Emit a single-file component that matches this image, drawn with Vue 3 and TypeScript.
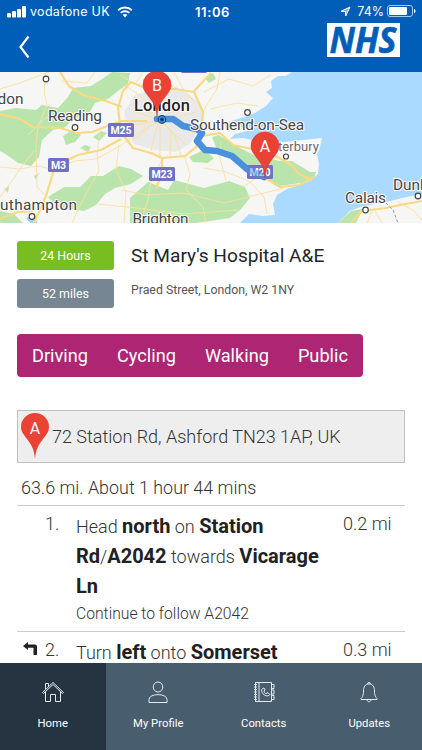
<script setup lang="ts">
import { ref } from 'vue'

interface Tab {
  id: string
  label: string
}

const modes: string[] = ['Driving', 'Cycling', 'Walking', 'Public']

const tabs: Tab[] = [
  { id: 'home', label: 'Home' },
  { id: 'profile', label: 'My Profile' },
  { id: 'contacts', label: 'Contacts' },
  { id: 'updates', label: 'Updates' }
]

const mode = ref('Driving')
const activeTab = ref('home')
</script>

<template>
  <div class="screen">
    <header class="header">
      <div class="status">
        <div class="carrier">
          <svg class="signal" width="19" height="12" viewBox="0 0 19 12">
            <rect x="0" y="7" width="4" height="4.5" rx="1" />
            <rect x="5" y="5" width="4" height="6.5" rx="1" />
            <rect x="10" y="3" width="4" height="8.5" rx="1" />
            <rect x="15" y="0" width="4" height="11.5" rx="1" />
          </svg>
          <span>vodafone UK</span>
          <svg class="wifi" width="16" height="12" viewBox="0 0 16 12">
            <path d="M1.1 4.2C5 .6 11 .6 14.9 4.2M3.7 6.9c2.4-2.2 6.2-2.2 8.6 0" />
            <path class="dot" d="M5.6 8.8c1.4-1.2 3.4-1.2 4.8 0L8 11.4z" />
          </svg>
        </div>
        <div class="time">11:06</div>
        <div class="battery">
          <svg width="11" height="11" viewBox="0 0 11 11">
            <path class="arrow" d="M10 1 1 5.3l4.5.2.2 4.5z" />
          </svg>
          <span>74%</span>
          <svg width="29" height="13" viewBox="0 0 29 13">
            <rect class="shell" x=".5" y=".5" width="25" height="11" rx="2.5" />
            <rect class="level" x="2" y="2" width="18" height="8" rx="1" />
            <path class="level" d="M27 4c2 .6 2 3.4 0 4z" />
          </svg>
        </div>
      </div>
      <div class="nav">
        <button class="back" aria-label="Back">
          <svg width="12" height="24" viewBox="0 0 12 24">
            <path d="M9.5 1.5 1.5 12l8 10.5" />
          </svg>
        </button>
        <svg class="nhs" width="73" height="34" viewBox="0 0 73 34">
          <rect width="73" height="34" />
          <text x="2.500" y="29.700" textLength="67" lengthAdjust="spacingAndGlyphs">NHS</text>
        </svg>
      </div>
    </header>

    <svg class="map" width="422" height="151" viewBox="0 72 422 151">
      <rect class="sea" y="72" width="422" height="151" />
      <path
        class="land"
        d="M0 72H292L286 76 278 76 271 81 272 88 266 92 273 98 266 106 255 113 245 117 234 120 224 125 233 129 242 127 251 130 235 134 230 139 243 138 257 141 270 142 285 142 303 140 322 138 320 148 317 154 319 164 318 174 312 180 302 184 287 189 277 195 273 204 275 215 263 216 249 214 240 223H0z"
      />
      <path class="land" d="M338 223 350 211 363 206 382 203 402 198 422 194V223z" />
      <g class="green">
        <path d="M0 111 16 108 36 110 42 105 63 109 72 119 66 127 53 130 42 140 39 157 31 166 18 163 7 155 0 151z" />
        <path d="M58 108 68 97 73 88 91 86 102 79 112 72 130 73 128 84 118 91 108 99 95 103 88 115 76 118z" />
        <path d="M48 197 64 187 80 187 91 176 103 176 119 166 131 169 143 176 131 184 115 188 105 194 96 205 84 211 57 207z" />
        <path d="M130 198 148 182 168 190 174 180 204 188 229 181 245 187 250 198 240 210 230 218 196 223H130z" />
        <path d="M212 137 219 135 229 142 240 148 256 156 280 161 292 161 310 172 316 172 314 180 294 184 278 186 265 179 239 163 216 147z" />
        <path d="M63 136 72 130 81 135 75 142 66 145z" />
        <path d="M189 157 204 150 214 158 208 163 193 162z" />
        <path d="M338 223 351 211 363 209 356 223z" />
        <path d="M0 211 14 214 23 223H0zM80 148l5-3 6 2-3 5zM161 74l8 2-3 5-7-1z" />
        <path d="M4 189 9 186 8 193zM34 176 39 173 36 180zM205 78l8-5 3 6-7 4zM93 137l8-6 6 2-8 8zM74 90l10-2-6 7z" />
      </g>
      <path
        class="city"
        d="M124 112 135 95 152 90 170 84 184 91 197 101 204 114 198 130 190 144 176 152 154 150 134 144 128 129z"
      />
      <path class="water" d="M26 218 32 216 38 223H30z" />
      <g class="minor">
        <path d="M0 167 20 169 37 166 52 169 75 161 96 159 120 146 140 132 160 120" />
        <path d="M0 89 20 83 38 76 50 72M46 72 44 92 47 105 38 127 36 143 37 187 45 195" />
        <path d="M0 197 12 181 22 166 34 151M61 81l26 2 8-11M65 114 45 118 28 135" />
        <path d="M100 131 97 154 99 171 88 190 80 206 72 223M119 145l-3 25 10 22-2 31" />
        <path d="M184 155 190 174 186 190 203 207 206 223M162 160l-11 20-3 20-8 23" />
        <path d="M121 190 148 195 184 193 224 203 252 196 284 188M98 204 136 208 184 214 238 210" />
        <path d="M204 168 226 172 249 181 264 197 267 214M221 142 220 159 226 181M270 150 256 178 242 188" />
        <path d="M126 86 142 97 154 111 160 120 155 133 151 151M132 111 160 120 190 97M132 140 160 120 186 145" />
        <path d="M160 120 175 136 181 155M160 120 171 131 170 158M160 120 160 158M133 125 160 120 140 105M160 120 194 113" />
        <path d="M120 75 135 84 143 72M174 72 183 89 193 100M204 92 229 79 253 86 271 75M210 109 237 103 258 106M220 72 217 89 203 111" />
        <path d="M375 211 382 223M398 202 414 211 422 220M367 223 373 209" />
      </g>
      <g class="major">
        <path d="M0 114 20 119 33 127 61 128 76 133 92 132 121 121 147 121" />
        <path d="M60 72 69 86 83 95 106 101 122 107M34 223 46 196 55 166 78 155 101 150 121 139" />
        <path d="M123 91 118 108 121 132 133 148 151 153 162 158 185 156 196 147 201 136 203 112 194 92 175 89 145 88 131 82z" />
        <path d="M162 158 162 174 156 188M194 91 211 73M202 136 220 133 233 145 252 149 274 155 290 164 299 174 312 180" />
        <path d="M250 165 265 178 280 187 299 185 313 177M0 219 18 212 33 211" />
        <path d="M351 223 362 211 386 208 400 205 422 201" />
      </g>
      <path class="border" d="M386 203 393 210 398 223" />
      <path class="route" d="M157 119 173 119 183 126 197 129 202 133 197 141 205 150 217 151 232 156 247 169 264 177" />

      <g class="shield">
        <rect x="108" y="123" width="26" height="14" rx="1.5" />
        <rect x="48" y="158" width="21" height="14" rx="1.5" />
        <rect x="149" y="167" width="26" height="14" rx="1.5" />
        <rect x="247" y="165" width="26" height="14" rx="1.5" />
        <rect x="181" y="66" width="26" height="7" rx="1.5" />
        <text x="121" y="133.800">M25</text>
        <text x="58.500" y="168.800">M3</text>
        <text x="162" y="177.800">M23</text>
        <text x="260" y="175.800">M20</text>
      </g>
      <path class="route over" d="M247 169 264 177" />

      <g class="towns">
        <circle cx="46" cy="79" r="2.800" />
        <circle cx="75" cy="127.500" r="2.800" />
        <circle cx="32" cy="216.500" r="2.800" />
        <circle cx="247.500" cy="112.500" r="2.800" />
        <circle cx="286" cy="156.500" r="2.500" />
        <circle cx="365.500" cy="210" r="2.800" />
        <circle cx="418" cy="196" r="2.800" />
        <circle class="start" cx="162" cy="119.500" r="3.800" />
        <circle class="start-dot" cx="162" cy="119.500" r="1.500" />
      </g>

      <g class="names">
        <text x="-2.500" y="104">don</text>
        <text x="48" y="121" textLength="54">Reading</text>
        <text class="capital" x="134" y="111" textLength="56">London</text>
        <text x="190" y="130" textLength="114">Southend-on-Sea</text>
        <text class="small" x="278" y="151" textLength="41">terbury</text>
        <text x="-9" y="210" textLength="86">outhampton</text>
        <text x="132.500" y="223.500" textLength="56">Brighton</text>
        <text x="345" y="203" textLength="41">Calais</text>
        <text x="393" y="189.500">Dunk</text>
      </g>

      <g class="pin">
        <path d="M157 116c-1-10-3.500-13-8-19-4-5-6-8-6-12a13.800 13.800 0 0 1 28 0c0 4-2 7-6 12-4.500 6-7 9-8 19z" />
        <text x="157" y="90.500">B</text>
        <path d="M265 178c-1-10-3.500-14-8-20-4-5-6-8-6-12a13.800 13.800 0 0 1 28 0c0 4-2 7-6 12-4.500 6-7 10-8 20z" />
        <text x="265" y="152">A</text>
      </g>
    </svg>

    <main class="content">
      <section class="place">
        <div class="badges">
          <span class="badge open">24 Hours</span>
          <span class="badge distance">52 miles</span>
        </div>
        <div class="details">
          <h1>St Mary's Hospital A&amp;E</h1>
          <p>Praed Street, London, W2 1NY</p>
        </div>
      </section>

      <div class="modes">
        <button v-for="m in modes" :key="m" @click="mode = m">{{ m }}</button>
      </div>

      <section class="directions">
        <div class="origin">
          <svg width="28" height="47" viewBox="0 0 28 47">
            <path d="M14 46c-1-10-3.500-14-8-20-4-5-6-8-6-12a14 14 0 0 1 28 0c0 4-2 7-6 12-4.500 6-7 10-8 20z" />
            <text x="14" y="20.500">A</text>
          </svg>
          <span>72 Station Rd, Ashford TN23 1AP, UK</span>
        </div>
        <p class="summary">63.6 mi. About 1 hour 44 mins</p>
        <div class="step">
          <span class="turn"></span>
          <span class="number">1.</span>
          <div class="text">
            Head <b>north</b> on <b>Station</b> <span class="road"><b>Rd</b>/<b>A2042</b></span> towards <b>Vicarage Ln</b>
            <div class="note">Continue to follow A2042</div>
          </div>
          <span class="miles">0.2 mi</span>
        </div>
        <div class="step">
          <span class="turn">
            <svg width="14" height="14" viewBox="0 0 14 14">
              <path d="M0 4 5 0v2.500h7q2 0 2 2V13h-3.500V5.700H5V8z" />
            </svg>
          </span>
          <span class="number">2.</span>
          <div class="text">Turn <b>left</b> onto <b>Somerset</b></div>
          <span class="miles">0.3 mi</span>
        </div>
      </section>
    </main>

    <nav class="tabs">
      <button
        v-for="tab in tabs"
        :key="tab.id"
        class="tab"
        :class="{ active: tab.id === activeTab }"
        @click="activeTab = tab.id"
      >
        <svg width="24" height="24" viewBox="0 0 24 24">
          <path v-if="tab.id === 'home'" d="M1.500 12.500 12 2.500l10.500 10-1 1L12 4.500l-9.500 9zM4.500 12v9.500h5v-7h5v7h5V12M4.500 9V3.500h3v3" />
          <path v-else-if="tab.id === 'profile'" d="M12 2c6.300 0 6.300 10 0 10S5.700 2 12 2zM3 22.500v-3c0-6.500 18-6.500 18 0v3z" />
          <g v-else-if="tab.id === 'contacts'">
            <path d="M3.500 2.500h16v19h-16zM7 2.500v19M19.500 4.500H22v4h-2.500M19.500 10H22v4h-2.500M19.500 15.500H22v4h-2.500" />
            <path d="M2 4.500h3M2 7h3M2 9.500h3M2 12h3M2 14.500h3M2 17h3M2 19.500h3" />
            <path d="M10.500 8.500c-3 3 2.500 9 6.500 7l1-1-2.500-1.800-1.500 1c-1.300-.7-2-1.500-2-2.700l1-1-1-2z" />
          </g>
          <path v-else d="M10.500 4a1.500 1.500 0 1 1 3 0M12 4c-4 0-5.500 3-5.500 7 0 4.500-1 6-2.500 7.500v1h16v-1c-1.500-1.500-2.500-3-2.500-7.500 0-4-1.500-7-5.500-7zM10 19.500c0 3 4 3 4 0" />
        </svg>
        <span>{{ tab.label }}</span>
      </button>
    </nav>
  </div>
</template>

<style>
body {
  margin: 0;
  background: #fff;
}
</style>

<style scoped>
.screen {
  width: 422px;
  height: 750px;
  display: flex;
  flex-direction: column;
  overflow: hidden;
  background: #fff;
  color: #212529;
  font-family: Roboto, "Liberation Sans", sans-serif;
}

button {
  border: none;
  padding: 0;
  background: none;
  color: inherit;
  font: inherit;
}

.header {
  height: 72px;
  flex-shrink: 0;
  background: #005eb8;
  color: #fff;
}

.status {
  height: 23px;
  display: grid;
  grid-template-columns: 1fr auto 1fr;
  align-items: center;
  padding: 0 6px 0 7px;
  font-family: Inter, sans-serif;
  font-size: 12.5px;
}

.carrier,
.battery {
  display: flex;
  align-items: center;
}

.carrier {
  gap: 4px;
}

.carrier span {
  letter-spacing: 0.3px;
}

.signal,
.wifi .dot,
.level {
  fill: #fff;
}

.wifi {
  margin-left: 3px;
  fill: none;
  stroke: #fff;
  stroke-width: 1.9;
}

.wifi .dot {
  stroke: none;
}

.time {
  padding-left: 2px;
  font-size: 13px;
  font-weight: 600;
  letter-spacing: 0.6px;
}

.battery {
  justify-content: flex-end;
  gap: 3px;
}

.battery svg:first-child {
  margin-right: 3px;
}

.arrow {
  fill: #fff;
  fill-opacity: 0.5;
  stroke: #fff;
}

.shell {
  fill: none;
  stroke: #a8c8e8;
}

.nav {
  display: flex;
  justify-content: space-between;
  padding: 0 22px 0 19px;
}

.back {
  height: 24px;
  margin-top: 12px;
}

.back svg {
  display: block;
  fill: none;
  stroke: #fff;
  stroke-width: 2.2;
}

.nhs rect {
  fill: #fff;
}

.nhs text {
  fill: #005eb8;
  font: italic 700 35px "Open Sans", sans-serif;
  stroke: #005eb8;
  stroke-width: 0.6;
}

.map {
  display: block;
  flex-shrink: 0;
}

.sea {
  fill: #aadaff;
}

.land {
  fill: #f6f6f5;
}

.green {
  fill: #b9e5ad;
}

.city {
  fill: #e9e9e9;
}

.water {
  fill: #9fd3f7;
}

.minor,
.major,
.border,
.route {
  fill: none;
  stroke-linejoin: round;
}

.minor {
  stroke: #fbe0a0;
  stroke-width: 0.9;
}

.major {
  stroke: #f9d983;
  stroke-width: 2.2;
}

.border {
  stroke: #999;
  stroke-dasharray: 3 2;
}

.route {
  stroke: #4a90dc;
  stroke-width: 6.5;
  stroke-linecap: round;
}

.over {
  opacity: 0.5;
}

.shield rect {
  fill: #7071c6;
}

.shield text {
  fill: #fff;
  font-size: 10.5px;
  font-weight: 700;
  text-anchor: middle;
}

.towns {
  fill: #fff;
  stroke: #444;
  stroke-width: 1.2;
}

.towns .start {
  fill: #4a90dc;
  stroke: #164b83;
}

.towns .start-dot {
  fill: #123;
  stroke: #164b83;
}

.names {
  fill: #444;
  stroke: #fff;
  stroke-width: 2;
  stroke-linejoin: round;
  paint-order: stroke;
  font-size: 15.4px;
}

.capital {
  fill: #222;
  font-size: 16.5px;
  font-weight: 500;
}

.small {
  fill: #666;
  font-size: 13px;
}

.pin path,
.origin path {
  fill: #ea4335;
}

.pin path {
  stroke: #c5362b;
  stroke-width: 0.5;
}

.pin text,
.origin text {
  fill: #fff;
  font-size: 16px;
  font-weight: 400;
  text-anchor: middle;
}

.content {
  flex: 1;
  min-height: 0;
  overflow: hidden;
  padding: 18px 17px 0;
}

.place {
  display: flex;
  gap: 17px;
}

.badges {
  width: 97px;
  display: grid;
  gap: 9px;
}

.badge {
  height: 29px;
  border-radius: 3px;
  color: #fff;
  font-size: 12.4px;
  line-height: 29px;
  text-align: center;
}

.open {
  background: #78be20;
}

.distance {
  background: #768692;
}

h1 {
  margin: 3px 0 0;
  font-size: 19.1px;
  font-weight: 400;
  line-height: 24px;
}

.details p {
  margin: 14px 0 0;
  color: #555;
  font-size: 12.3px;
  line-height: 16px;
}

.modes {
  width: 346px;
  height: 43px;
  display: flex;
  justify-content: space-between;
  box-sizing: border-box;
  margin-top: 26px;
  padding: 0 15px;
  border-radius: 4px;
  background: #ae2573;
  color: #fff;
  font-size: 18.2px;
}

.directions {
  margin-top: 33px;
  color: #333;
  font-size: 18px;
  font-weight: 300;
}

.origin {
  height: 53px;
  display: flex;
  align-items: center;
  gap: 3px;
  box-sizing: border-box;
  padding-left: 3px;
  border: 1px solid #c0c0c0;
  background: #eee;
}

.summary {
  height: 42px;
  margin: 0;
  padding: 0 4px;
  border-bottom: 1px solid #ccc;
  font-size: 17.9px;
  line-height: 49px;
}

.step {
  min-height: 125px;
  display: grid;
  grid-template-columns: 28px 31px 1fr 62px;
  border-bottom: 1px solid #ccc;
  line-height: 30px;
}

.turn {
  padding: 10px 0 0 6px;
  line-height: 0;
}

.turn svg {
  fill: #222;
}

.number,
.miles {
  padding-top: 3px;
}

.text {
  padding: 6px 15px 0 0;
}

.text b {
  color: #212121;
  font-size: 20px;
  font-weight: 700;
  line-height: 20px;
}

.road {
  white-space: nowrap;
}

.note {
  font-size: 15.7px;
  line-height: 24px;
}

.tabs {
  height: 87px;
  flex-shrink: 0;
  display: grid;
  grid-template-columns: repeat(4, 1fr);
  background: #485d6e;
}

.tab {
  display: flex;
  flex-direction: column;
  align-items: center;
  gap: 13px;
  padding-top: 17px;
  color: #fff;
  font-size: 11.3px;
  line-height: 14px;
}

.tab svg {
  fill: none;
  stroke: #e5eaee;
}

.tab.active {
  background: #263442;
}
</style>
